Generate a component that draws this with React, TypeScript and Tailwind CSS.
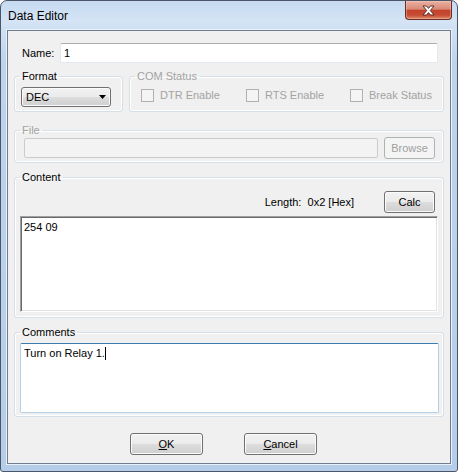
import React from 'react';

const font = "font-['Liberation_Sans',Arial,sans-serif]";

const btn =
  'h-[22px] rounded-[3px] border border-[#707070] bg-[linear-gradient(to_bottom,#f2f2f2_0%,#ebebeb_48%,#dddddd_52%,#cfcfcf_100%)] shadow-[inset_0_0_0_1px_#fbfbfb] text-[11px] text-black flex items-center justify-center';

const btnDisabled =
  'h-[22px] rounded-[3px] border border-[#adb2b5] bg-[#f4f4f4] text-[11px] text-[#a0a0a0] flex items-center justify-center';

const group = 'border border-[#d5dfe5] rounded-[3px] shadow-[inset_0_0_0_1px_#ffffff] m-0 p-0 min-w-0';

function CheckItem({ label, width }: { label: string; width?: string }) {
  return (
    <div className={`flex items-center ${width ?? ''}`}>
      <div className="w-[13px] h-[13px] border border-[#b1b1b1] bg-[#f4f4f4] shrink-0" />
      <span className="ml-[6px] text-[#a3a3a3]">{label}</span>
    </div>
  );
}

function Legend({ text, disabled }: { text: string; disabled?: boolean }) {
  return (
    <legend className={`ml-[5px] px-[2px] leading-[13px] ${disabled ? 'text-[#a3a3a3]' : 'text-black'}`}>
      {text}
    </legend>
  );
}

export default function App() {
  return (
    <div className={`w-[458px] h-[472px] bg-white ${font} text-[11px] leading-[13px] text-black`}>
      {/* Window frame */}
      <div className="w-[458px] h-[472px] flex flex-col rounded-t-[7px] rounded-b-[3px] border border-[#4a5667] bg-[linear-gradient(to_bottom,#c6daf1_0%,#d4e4f5_20px,#bed4ed_60px,#b6cde9_100%)] px-[6px] pb-[7px]">
        {/* Title bar */}
        <div className="h-[29px] flex justify-between items-start shrink-0">
          <span className="pl-[1px] pt-[8px] text-[12px] leading-[15px] text-black">Data Editor</span>
          <div className="-mr-[1px] w-[47px] h-[19px] rounded-b-[4px] border border-t-0 border-[#6b2c22] bg-[linear-gradient(to_bottom,#eab0a2_0%,#d98a77_45%,#c4432c_52%,#c84a32_78%,#dd8a6d_100%)] shadow-[inset_0_0_0_1px_rgba(255,220,210,0.35)] flex items-center justify-center">
            <svg width="13" height="11" viewBox="0 0 13 11">
              <path
                d="M1 1 H4.5 L6.5 3.4 L8.5 1 H12 L8.3 5.5 L12 10 H8.5 L6.5 7.6 L4.5 10 H1 L4.7 5.5 Z"
                fill="#ffffff"
                stroke="#4a2520"
                strokeWidth="0.9"
                strokeLinejoin="round"
              />
            </svg>
          </div>
        </div>

        {/* Client area */}
        <div className="flex-1 flex flex-col border border-[#6f7d8f] bg-[#f0f0f0] shadow-[0_0_0_1px_#e8f0fa]">
          {/* Name */}
          <div className="mt-[12px] pl-[14px] flex items-center">
            <span className="w-[38px]">Name:</span>
            <div className="w-[378px] h-[20px] rounded-[2px] border border-[#e2e8ee] border-t-[#abadb3] bg-white flex items-center pl-[3px]">
              1
            </div>
          </div>

          {/* Format + COM Status */}
          <div className="mt-[7px] px-[6px] flex gap-[6px]">
            <fieldset className={`${group} w-[109px] h-[42px]`}>
              <Legend text="Format" />
              <div className="mt-[4px] ml-[6px] w-[90px] h-[20px] rounded-[3px] border border-[#707070] bg-[linear-gradient(to_bottom,#f2f2f2_0%,#ebebeb_48%,#dddddd_52%,#cfcfcf_100%)] shadow-[inset_0_0_0_1px_#fbfbfb] flex items-center justify-between pl-[4px] pr-[4px]">
                <span>DEC</span>
                <svg width="7" height="4" viewBox="0 0 7 4">
                  <path d="M0 0 H7 L3.5 4 Z" fill="#000" />
                </svg>
              </div>
            </fieldset>
            <fieldset className={`${group} flex-1 h-[42px]`}>
              <Legend text="COM Status" disabled />
              <div className="mt-[6px] pl-[11px] flex items-center">
                <CheckItem label="DTR Enable" width="w-[105px]" />
                <CheckItem label="RTS Enable" width="w-[104px]" />
                <CheckItem label="Break Status" />
              </div>
            </fieldset>
          </div>

          {/* File */}
          <div className="mt-[12px] px-[6px]">
            <fieldset className={`${group} h-[39px]`}>
              <Legend text="File" disabled />
              <div className="flex items-start pl-[9px] pr-[8px] gap-[6px]">
                <div className="mt-[1px] flex-1 h-[20px] rounded-[2px] border border-[#c9cdd1] bg-[#f3f3f3]" />
                <div className={`${btnDisabled} w-[51px]`}>Browse</div>
              </div>
            </fieldset>
          </div>

          {/* Content */}
          <div className="mt-[8px] px-[6px]">
            <fieldset className={`${group} h-[147px]`}>
              <Legend text="Content" />
              <div className="mt-[7px] flex items-center justify-end pr-[8px]">
                <span className="mr-[30px]">Length:&nbsp;&nbsp;0x2 [Hex]</span>
                <div className={`${btn} w-[51px]`}>Calc</div>
              </div>
              <div className="mt-[3px] mx-[5px] h-[96px] border border-[#a0a0a0] border-r-white border-b-white shadow-[inset_1px_1px_0_#696969,inset_-1px_-1px_0_#e3e3e3] bg-white pl-[3px] pt-[4px]">
                254 09
              </div>
            </fieldset>
          </div>

          {/* Comments */}
          <div className="mt-[8px] px-[6px]">
            <fieldset className={`${group} h-[91px]`}>
              <Legend text="Comments" />
              <div className="mt-[4px] ml-[5px] mr-[4px] h-[70px] rounded-[2px] border border-[#b5cfe7] border-t-[#3d7bad] bg-white pl-[3px] pt-[3px]">
                Turn on Relay 1.
                <span className="inline-block w-px h-[13px] bg-black align-top" />
              </div>
            </fieldset>
          </div>

          {/* Buttons */}
          <div className="mt-[16px] pl-[122px] flex gap-[41px]">
            <div className={`${btn} w-[73px]`}>
              <span>
                <span className="underline">O</span>K
              </span>
            </div>
            <div className={`${btn} w-[73px]`}>
              <span>
                <span className="underline">C</span>ancel
              </span>
            </div>
          </div>
        </div>
      </div>
    </div>
  );
}
